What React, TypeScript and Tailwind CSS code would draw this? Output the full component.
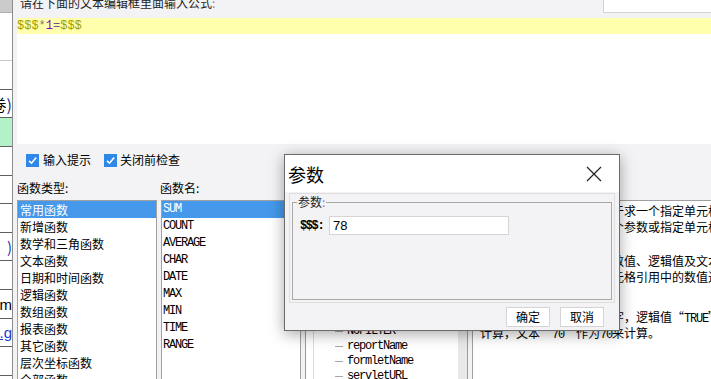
import React from 'react';

const types = ['常用函数', '新增函数', '数学和三角函数', '文本函数', '日期和时间函数', '逻辑函数', '数组函数', '报表函数', '其它函数', '层次坐标函数', '全部函数'];
const names = ['SUM', 'COUNT', 'AVERAGE', 'CHAR', 'DATE', 'MAX', 'MIN', 'TIME', 'RANGE'];
const treeItems = ['fine_username', 'fine_role', 'fine_position', 'fr_username', 'fr_authority', 'SESSIONID', 'NULL', 'DATASET', 'NOFILTER', 'reportName', 'formletName', 'servletURL'];

function Check() {
  return (
    <span className="w-[13px] h-[13px] bg-[#2f88e8] flex items-center justify-center shrink-0">
      <svg width="11" height="11" viewBox="0 0 11 11">
        <path d="M2 5.8 L4.5 8.2 L9.2 2.6" fill="none" stroke="#fff" strokeWidth="1.6" />
      </svg>
    </span>
  );
}

export default function App() {
  const mono = "font-['Liberation_Mono',monospace]";
  return (
    <div className="w-[711px] h-[379px] overflow-hidden flex bg-[#f3f3f5] text-[12px] text-black font-['Noto_Sans_CJK_SC','Noto_Sans',sans-serif] relative">
      {/* left strip */}
      <div className="w-[13px] shrink-0 flex flex-col bg-white border-r border-[#8c8c8c] overflow-hidden">
        <div className="h-[13px] shrink-0 bg-[#cbcbcb] border-b border-[#b0b0b0]" />
        <div className="h-[48px] shrink-0 border-b border-[#c8c8c8]" />
        <div className="h-[29px] shrink-0 border-b border-[#606060]" />
        <div className="h-[28px] shrink-0 border-b border-[#606060] flex items-center justify-end whitespace-nowrap text-[16px] leading-none">
          <span>(卷</span><span className="text-[#1a2a8a]">)</span>
        </div>
        <div className="h-[29px] shrink-0 bg-[#b3f2c8] border-b border-[#606060]" />
        <div className="h-[29px] shrink-0 border-b border-[#606060]" />
        <div className="h-[28px] shrink-0 border-b border-[#606060]" />
        <div className="h-[29px] shrink-0 border-b border-[#606060]" />
        <div className="h-[28px] shrink-0 border-b border-[#606060] flex items-center justify-end text-[15px] leading-none text-[#1f3aa0]">)</div>
        <div className="h-[29px] shrink-0 border-b border-[#606060]" />
        <div className="h-[29px] shrink-0 border-b border-[#606060] flex items-center justify-end whitespace-nowrap text-[15px] leading-none font-['Liberation_Sans',sans-serif]">am</div>
        <div className="h-[28px] shrink-0 border-b border-[#606060] flex items-center justify-end whitespace-nowrap text-[15px] leading-none font-['Liberation_Sans',sans-serif] text-[#1a3ad0] underline">.g</div>
        <div className="h-[29px] shrink-0 border-b border-[#606060]" />
      </div>

      {/* main */}
      <div className="flex-1 min-w-0 flex flex-col pl-[4px]">
        <div className="h-[18px] shrink-0 flex justify-between">
          <div className="pl-[3px] leading-[6px] whitespace-nowrap text-[#222]">
            请在下面的文本编辑框里面输入公式<span className="text-[#a070c0]">:</span>
          </div>
          <div className="w-[108px] h-[13px] bg-white border-l border-b border-[#d2d2d2]" />
        </div>
        <div className="h-[126px] shrink-0 bg-white">
          <div className={`h-[16px] bg-[#ffffac] leading-[16px] text-[12px] whitespace-nowrap ${mono}`}>
            <span className="text-[#a0a000]">$$$</span>
            <span className="text-[#8a7a50]">*</span>
            <span className="text-[#8a00d0]">1</span>
            <span className="text-[#7a4a8a]">=</span>
            <span className="text-[#a0a000]">$$$</span>
          </div>
        </div>
        <div className="h-[32px] shrink-0 flex items-center pl-[9px]">
          <Check />
          <span className="ml-[4px]">输入提示</span>
          <span className="ml-[13px]"><Check /></span>
          <span className="ml-[3px]">关闭前检查</span>
        </div>
        <div className="h-[24px] shrink-0 flex items-center">
          <span className="w-[143px] shrink-0">函数类型:</span>
          <span>函数名:</span>
        </div>
        <div className="flex-1 flex gap-[4px] min-h-0">
          <div className="w-[140px] shrink-0 bg-white border border-[#a0a0a0] border-b-0">
            {types.map((t, i) => (
              <div key={t} className={`h-[17px] leading-[17px] pl-[2px] whitespace-nowrap ${i === 0 ? 'bg-[#4598ea] text-white' : ''}`}>{t}</div>
            ))}
          </div>
          <div className="w-[140px] shrink-0 bg-white border border-[#a0a0a0] border-b-0">
            {names.map((t, i) => (
              <div key={t} className={`h-[17px] leading-[17px] pl-[1px] whitespace-nowrap ${mono} tracking-[-1.2px] ${i === 0 ? 'bg-[#4598ea] text-white' : ''}`}>{t}</div>
            ))}
          </div>
          <div className="w-[163px] shrink-0 bg-white border border-[#9a9a9a] border-b-0 flex">
            <div className="w-[7px] shrink-0" />
            <div className="flex-1 border-l border-[#dadada] pt-[3px]">
              {treeItems.map((t) => (
                <div key={t} className="h-[15px] flex items-center pl-[21px]">
                  <span className="w-[8px] border-t border-[#a8a8a8] shrink-0" />
                  <span className={`ml-[4px] ${mono} tracking-[-1.2px] leading-[15px] whitespace-nowrap`}>{t}</span>
                </div>
              ))}
            </div>
            <div className="w-[9px] shrink-0 bg-[#e8e8e8]" />
          </div>
          <div className="w-[300px] shrink-0 bg-white border-l border-t border-[#a0a0a0] pl-[7px] pt-[2px] whitespace-nowrap leading-[16px]">
            <div className="h-[16px]">函数功能说明：此函数用于求一个指定单元格区域中所有数字之和。</div>
            <div className="h-[16px]">参数说明：包含一到三十个参数或指定单元格区域。</div>
            <div className="h-[18px]" />
            <div className="h-[16px]">说明：参数可以是各类型数值、逻辑值及文本表达式。</div>
            <div className="h-[16px]">表达式等；如果参数是单元格引用中的数值进行计算。</div>
            <div className="h-[24px]" />
            <div className="h-[16px]">数组中的文本被转换为数字，逻辑值“<span className={`${mono} tracking-[-1.2px]`}>TRUE</span>”被作为1</div>
            <div className="h-[16px]">计算，文本“<span className={`${mono} tracking-[-1.2px]`}>70</span>”作为<span className={`${mono} tracking-[-1.2px]`}>70</span>来计算。</div>
          </div>
        </div>
      </div>

      {/* dialog */}
      <div className="absolute left-[284px] top-[154px] w-[336px] h-[177px] border border-[#6b6b6b] bg-[#f3f3f5] flex flex-col shadow-[0_3px_14px_rgba(0,0,0,0.35)]">
        <div className="h-[37px] shrink-0 bg-white flex items-center justify-between pl-[3px] pr-[17px]">
          <span className="text-[18px] leading-none">参数</span>
          <svg width="16" height="16" viewBox="0 0 16 16">
            <path d="M1 1 L15 15 M15 1 L1 15" stroke="#222" strokeWidth="1.2" fill="none" />
          </svg>
        </div>
        <div className="px-[4px] pt-[1px]">
          <div className="h-[110px] border border-[#dedede] pt-[8px] px-[2px] pb-[2px] flex flex-col">
            <div className="flex-1 border border-[#a8a8a4] relative pt-[13px] pl-[7px]">
              <span className="absolute -top-[7px] left-[4px] bg-[#f3f3f5] px-[1px] leading-[12px] text-[#222]">参数<span className="text-[#a070c0]">:</span></span>
              <div className="flex items-center">
                <span className={`${mono} tracking-[-1.4px] font-bold w-[29px]`}>$$$:</span>
                <div className="w-[180px] h-[19px] bg-white border border-[#d5d5d5] pl-[3px] flex items-center text-[13px] font-['Liberation_Sans',sans-serif]">78</div>
              </div>
            </div>
          </div>
        </div>
        <div className="flex justify-end gap-[10px] pr-[15px] pt-[4px]">
          <div className="w-[44px] h-[20px] bg-white border border-[#d4d4d4] flex items-center justify-center">确定</div>
          <div className="w-[44px] h-[20px] bg-white border border-[#d4d4d4] flex items-center justify-center">取消</div>
        </div>
      </div>
    </div>
  );
}
